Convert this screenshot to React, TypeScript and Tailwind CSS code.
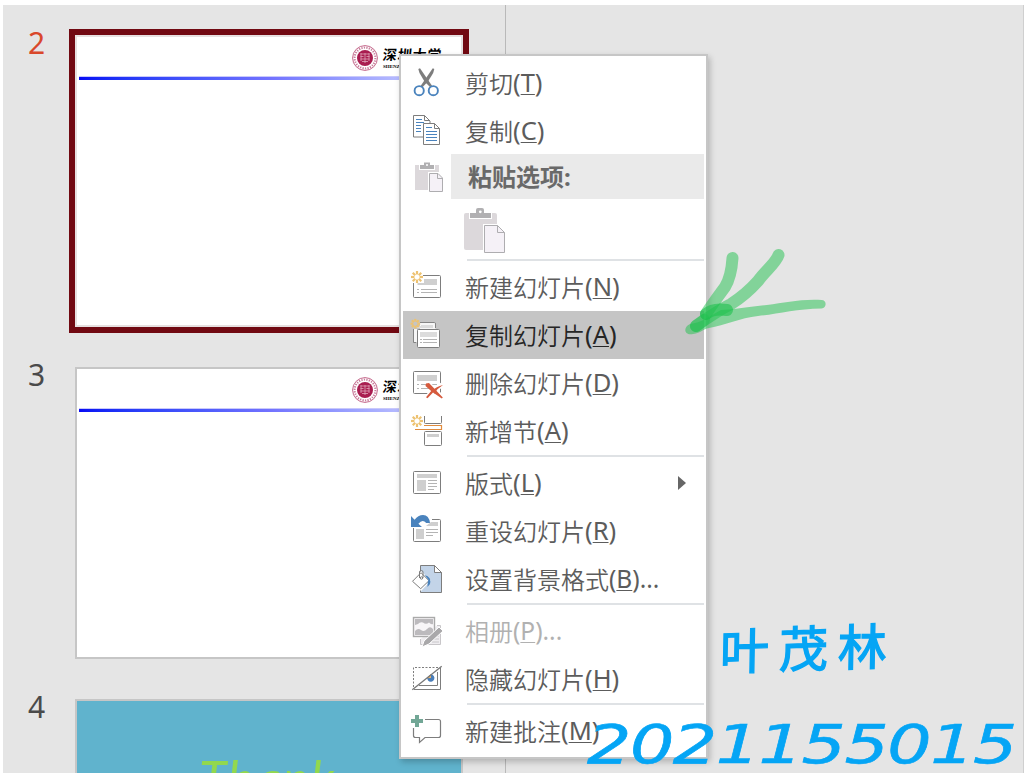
import type { ReactNode } from "react";

const G = "#7d7d7d";
const L = "#b4b4b4";

function Star({ x, y, r = 6 }: { x: number; y: number; r?: number }) {
  return (
    <g stroke="#edc271" strokeWidth="2.2">
      {[0, 45, 90, 135, 180, 225, 270, 315].map((a) => (
        <line key={a} x1={x + r * 0.42} y1={y} x2={x + r} y2={y} transform={`rotate(${a} ${x} ${y})`} />
      ))}
    </g>
  );
}

function Icon({ children }: { children: ReactNode }) {
  return (
    <svg width="48" height="48" viewBox="0 0 48 48" fill="none" className="h-12 w-12 shrink-0">
      {children}
    </svg>
  );
}

const CutIcon = (
  <Icon>
    <path d="M15.3 10 L17 9.3 L29.5 27.5 L27 28 L21.5 22.5 L16.5 14 Z" fill={G} />
    <path d="M31.3 10 L29.8 9.3 L17.2 27.5 L19.7 28 L25 22.5 L30.2 14 Z" fill={G} />
    <circle cx="16.2" cy="31.7" r="4.6" stroke="#4a83bd" strokeWidth="1.9" />
    <circle cx="30.3" cy="31.7" r="4.6" stroke="#4a83bd" strokeWidth="1.9" />
  </Icon>
);

const CopyIcon = (
  <Icon>
    <path d="M21 30 H10.5 V8.5 H21.5 L27 14 V16" stroke={G} />
    <path d="M21.5 8.5 V13.5 H27" stroke={G} />
    <path d="M13 12.5h6M13 15.5h8M13 18.5h5M13 21.5h5M13 24.5h5" stroke="#4a83bd" />
    <path d="M20.5 16.5 H31.5 L36.5 21.5 V37.5 H20.5 Z" fill="#fff" stroke={G} />
    <path d="M31.5 16.5 V21.5 H36.5" stroke={G} />
    <path d="M23 20.5h6M23 24.5h11M23 27.5h11M23 30.5h11M23 33.5h11" stroke="#4a83bd" />
  </Icon>
);

const PasteIcon = (
  <Icon>
    <path d="M12 11h24v25H12z" fill="#dcd8db" />
    <path d="M16 10h16v6H16z" fill="#fff" />
    <path d="M17 11h4V8.5h6V11h4v4H17z" fill="#b1b0b2" />
    <circle cx="24" cy="11" r="1" fill="#fff" />
    <path d="M25 18h16v22H25z" fill="#fff" />
    <path d="M26.5 19.5H35L39.5 24V37.5h-13z" fill="#f5f1f7" stroke="#aeadb0" />
    <path d="M34.5 19.5v5h5" stroke="#aeadb0" />
  </Icon>
);

const NewSlideIcon = (
  <Icon>
    <path d="M20 12.5H36.5Q37.5 12.5 37.5 13.5V33.5Q37.5 34.5 36.5 34.5H11.5Q10.5 34.5 10.5 33.5V20" stroke={G} />
    <path d="M21 16h13v6H14.5v-2H21z" fill="#cfcfcf" />
    <path d="M14 26.5h2M18 26.5h16M14 29.5h2M18 29.5h16" stroke={L} />
    <Star x={14} y={14} />
  </Icon>
);

const DuplicateIcon = (
  <Icon>
    <path d="M17 11.5H31.5Q32.5 11.5 32.5 13V18H14V31H11V18H17Z" fill="#f6f6f6" />
    <path d="M13 31.5H10.5V18M17 11.5H31.5Q32.5 11.5 32.5 13V17" stroke="#858585" />
    <path d="M18 14h12v3H14v-2h4z" fill="#dcdcdc" />
    <rect x="14.5" y="18.5" width="22" height="18" rx="1" fill="#fff" stroke={G} />
    <path d="M17 21h17v5H17z" fill="#dcdcdc" />
    <path d="M17 28.5h2M20 28.5h14M17 31.5h2M20 31.5h14" stroke={L} />
    <Star x={12.3} y={12.7} r={4.8} />
  </Icon>
);

const DeleteIcon = (
  <Icon>
    <rect x="10.5" y="12.5" width="27" height="22" rx="1" stroke={G} />
    <path d="M14 16h20v6H14z" fill="#cfcfcf" />
    <path d="M14 25.5h2M18 25.5h16M14 29.5h2M18 29.5h8" stroke={L} />
    <path d="M24 25Q31 29 38.5 38.5M39 26Q31 30 24 38.5" stroke="#fff" strokeWidth="5" />
    <path d="M23 24.5L26 24L39.8 38.5L38.8 39.5L30 33.5L24.5 39.3L23 38.3L28.2 32L22.5 27Z" fill="#d65a3d" />
    <path d="M29.5 31.5Q33 27.5 40 26Q35 29 31.5 34Z" fill="#d65a3d" />
  </Icon>
);

const SectionIcon = (
  <Icon>
    <path d="M21.5 9V15.5Q21.5 16.5 22.5 16.5H37.5Q38.5 16.5 38.5 15.5V9" stroke={G} />
    <path d="M21 18.5H38.5V22.5H12" stroke="#e08b3e" strokeWidth="1.2" />
    <rect x="21.5" y="24.5" width="17" height="14" rx="1" stroke={G} />
    <path d="M24 27h12v3H24z" fill="#cfcfcf" />
    <Star x={14} y={14} />
  </Icon>
);

const LayoutIcon = (
  <Icon>
    <rect x="10.5" y="12.5" width="27" height="22" rx="1" stroke={G} />
    <path d="M14 15h20v4H14zM14 21h9v11H14z" fill="#cfcfcf" />
    <path d="M25 21.5h9M25 24.5h9M25 27.5h9M25 30.5h6" stroke={L} />
  </Icon>
);

const ResetIcon = (
  <Icon>
    <path d="M29 12.5H36.5Q37.5 12.5 37.5 13.5V33.5Q37.5 34.5 36.5 34.5H11.5Q10.5 34.5 10.5 33.5V21" stroke={G} />
    <path d="M28 15h7v4H23zM13 22h8v10h-8z" fill="#cfcfcf" />
    <path d="M23 22.5h12M23 25.5h12M23 28.5h7" stroke={L} />
    <path d="M8 9V20H19L15.4 16.8Q19.5 11.5 23.2 16H27Q26 8.2 20 8Q15 8 11.6 12.7Z" fill="#4a83bd" />
  </Icon>
);

const BackgroundIcon = (
  <Icon>
    <path d="M17.5 10.5H31.5L38.5 17.5V37.5H17.5Z" fill="#c3d4e8" stroke={G} />
    <path d="M31.5 10.5V17.5H38.5Z" fill="#fff" stroke={G} />
    <path d="M8 26.3L18 16L28 25.7L18 36Z" fill="#fff" />
    <path d="M9.5 26.3L18 17.7L26 25.7L17.7 33.7Z" fill="#fff" stroke={G} />
    <path d="M16.5 23V17Q16.5 15.5 18.3 15.5Q20 15.5 20 17V23" stroke={G} />
    <circle cx="18.5" cy="23" r="1.2" stroke={G} />
    <path d="M21.5 20Q29 22 27 29L24.5 32Q24.5 26 25.5 25Z" fill="#4a83bd" />
  </Icon>
);

const AlbumIcon = (
  <Icon>
    <path d="M34 18.5H37.5V37.5H17.5V32" fill="#efedf0" stroke="#c8c6c9" />
    <path d="M29 29h7M29 32h7M29 35h7" stroke="#c8c6c9" />
    <rect x="10.5" y="10.5" width="21" height="19" fill="#f8f6f8" stroke="#aaa" strokeWidth="1.4" />
    <path d="M12 12h18v5Q28 18 26 15.5Q23 18 20 15.5Q17 14.5 15 17L12 18zM12 24Q15 20.5 18 23T24 22T30 22V28H12Z" fill="#bcbabd" />
    <path d="M19 40L21 34L36 20L40 24L26 37Z" fill="#a9a8aa" stroke="#fff" />
  </Icon>
);

const HideIcon = (
  <Icon>
    <path d="M10.5 32V12.5H36" stroke={G} strokeDasharray="2 1.5" />
    <path d="M37.5 13V34.5H11M34.5 17V30.5H16" stroke={G} />
    <path d="M24 23L27.7 19.3A3.7 3.7 0 1 1 25 25.5Z" fill="#4a7db8" />
    <path d="M23.5 23.2L28 19.3V23Z" fill="#e7b36b" />
    <path d="M9.3 34.7L38.7 11.3" stroke="#777" strokeWidth="1.3" />
  </Icon>
);

const CommentIcon = (
  <Icon>
    <path d="M22 12.5H35.5Q37.5 12.5 37.5 14.5V28.5Q37.5 30.5 35.5 30.5H22L16.5 35.5V30.5H12.5Q10.5 30.5 10.5 28.5V21" stroke={G} strokeWidth="1.2" />
    <path d="M12 8h4v4h4v4h-4v4h-4v-4H8v-4h4z" fill="#72a796" />
  </Icon>
);

interface ItemProps {
  icon: ReactNode;
  label: string;
  hotkey: string;
  suffix?: string;
  disabled?: boolean;
  active?: boolean;
  submenu?: boolean;
  short?: boolean;
}

function Item({ icon, label, hotkey, suffix = "", disabled, active, submenu, short }: ItemProps) {
  return (
    <li
      className={`flex ${short ? "h-[47px]" : "h-12"} ${active ? "bg-[#c5c5c5] text-[#262626]" : disabled ? "text-[#b1b1b1]" : "text-[#5c5c5c]"}`}
    >
      {icon}
      <span className="flex h-12 flex-1 items-center pl-[14px] text-[24px] leading-none whitespace-nowrap">
        <span className="font-['Noto_Sans_CJK_SC_DemiLight','Noto_Sans_CJK_SC',sans-serif] font-[350]">{label}</span>
        <span className={suffix ? "text-[24.5px]" : "text-[25.5px]"}>
          (<span className="underline decoration-1 underline-offset-[2px]">{hotkey}</span>){suffix}
        </span>
      </span>
      {submenu && (
        <span className="flex h-12 w-[26px] items-center">
          <svg width="8" height="14" viewBox="0 0 8 14">
            <path d="M0 0L8 7L0 14Z" fill="#666" />
          </svg>
        </span>
      )}
    </li>
  );
}

function Separator() {
  return <li className="ml-16 h-1 border-t-2 border-[#dfe2e5]" />;
}

function ContextMenu() {
  return (
    <ul className="absolute top-[54px] left-[399px] flex h-[705px] w-[309px] flex-col border-2 border-[#c6c6c6] bg-white px-[2px] pt-[3px] pb-[2px] font-['Noto_Sans','Noto_Sans_CJK_SC',sans-serif] shadow-[2px_3px_6px_rgba(0,0,0,0.22)]">
      <Item icon={CutIcon} label="剪切" hotkey="T" />
      <Item icon={CopyIcon} label="复制" hotkey="C" short />
      <li className="flex h-[45px] text-[#696969]">
        {PasteIcon}
        <span className="flex flex-1 items-center bg-[#eaeaea] pl-[17px] text-[24px] leading-none font-bold">粘贴选项:</span>
      </li>
      <li className="h-[60px] pt-[9px] pl-[61px]">
        <svg width="42" height="46" viewBox="0 0 42 46" fill="none">
          <path d="M2 5H31Q33 5 33 7V42H2Q0 42 0 40V7Q0 5 2 5Z" fill="#dcd8db" />
          <path d="M5 4h23v7H5z" fill="#fff" />
          <path d="M6 5h6V2q0-2 2-2h4q2 0 2 2v3h7v5H6z" fill="#b1b0b2" />
          <circle cx="16.3" cy="3.8" r="1.4" fill="#fff" />
          <path d="M19 16h23v30H19z" fill="#fff" />
          <path d="M20.5 17.5H33.5L40.5 24.5V44.5H20.5Z" fill="#f5f1f7" stroke="#aeadb0" />
          <path d="M33.5 17.5V24.5H40.5" stroke="#aeadb0" />
        </svg>
      </li>
      <Separator />
      <Item icon={NewSlideIcon} label="新建幻灯片" hotkey="N" />
      <Item icon={DuplicateIcon} label="复制幻灯片" hotkey="A" active />
      <Item icon={DeleteIcon} label="删除幻灯片" hotkey="D" />
      <Item icon={SectionIcon} label="新增节" hotkey="A" />
      <Separator />
      <Item icon={LayoutIcon} label="版式" hotkey="L" submenu />
      <Item icon={ResetIcon} label="重设幻灯片" hotkey="R" />
      <Item icon={BackgroundIcon} label="设置背景格式" hotkey="B" suffix="..." />
      <Separator />
      <Item icon={AlbumIcon} label="相册" hotkey="P" suffix="..." disabled />
      <Item icon={HideIcon} label="隐藏幻灯片" hotkey="H" />
      <Separator />
      <Item icon={CommentIcon} label="新建批注" hotkey="M" />
    </ul>
  );
}

function SlideHeader() {
  return (
    <>
      <div className="flex h-[39px] items-start pt-[7px] pl-[274px]">
        <svg width="28" height="28" viewBox="0 0 28 28" fill="none" className="shrink-0">
          <circle cx="14" cy="14" r="12.4" stroke="#c4668a" strokeWidth="1" />
          <circle cx="14" cy="14" r="10.4" stroke="#c97f9c" strokeWidth="2" strokeDasharray="1.3 1.2" />
          <circle cx="14" cy="14" r="8" fill="#a91d50" />
          <path d="M9.5 10h9M9.5 12.5h3M15.5 12.5h3M9.5 15h9M11 17.5h6M14 9v10M10 9v8M18 9v8" stroke="#dfa3b8" strokeWidth=".8" />
        </svg>
        <div className="ml-[4px] flex flex-col whitespace-nowrap text-black">
          <span className="-skew-x-6 font-['Noto_Sans_CJK_SC',sans-serif] text-[14px] leading-[20px] font-bold tracking-[0.8px]">深圳大学</span>
          <span className="font-['Liberation_Serif',serif] text-[5px] leading-[5px] font-bold">SHENZHEN UNIVERSITY</span>
        </div>
      </div>
      <div className="ml-[2px] h-[4px] border-t border-[#c9c9fb] bg-linear-to-r from-[#0808f4] via-[#7272ff] to-[#dadaff]" />
    </>
  );
}

function SlideNumber({ n, selected }: { n: number; selected?: boolean }) {
  return (
    <span
      className={`w-[66px] shrink-0 pl-[25px] font-['Noto_Sans',sans-serif] text-[30px] leading-[28px] ${selected ? "text-[#d9482b]" : "-mt-[6px] text-[#4a4a4a]"}`}
    >
      {n}
    </span>
  );
}

function Thumbnails() {
  return (
    <aside className="flex h-[768px] w-[503px] shrink-0 flex-col overflow-hidden border-r border-[#b9b9b9] pt-6">
      <div className="flex h-[304px] shrink-0">
        <SlideNumber n={2} selected />
        <div className="h-[304px] w-[400px] border-[6px] border-[#710912]">
          <div className="h-full border-2 border-[#e6e0e0] bg-white">
            <SlideHeader />
          </div>
        </div>
      </div>
      <div className="mt-[34px] flex h-[292px] shrink-0">
        <SlideNumber n={3} />
        <div className="ml-[6px] h-[292px] w-[388px] border-2 border-[#c6c6c6] bg-white">
          <SlideHeader />
        </div>
      </div>
      <div className="mt-10 flex h-[292px] shrink-0">
        <SlideNumber n={4} />
        <div className="ml-[6px] h-[292px] w-[388px] border-2 border-[#c6c6c6] bg-[#60b3cd] pt-[47px] pl-[122px]">
          <span className="block font-['Lato',sans-serif] text-[50px] leading-[60px] tracking-[1.5px] whitespace-nowrap text-[#92d84e] italic">
            Thank
          </span>
        </div>
      </div>
    </aside>
  );
}

function Annotations() {
  return (
    <>
      <svg width="160" height="100" viewBox="680 240 160 100" fill="none" className="absolute top-[240px] left-[680px]" strokeLinecap="round" strokeLinejoin="round">
        <g stroke="#1fc14e" strokeOpacity=".5">
          <path d="M732.5 258C732 266 731 277 725 287C717 298 711 306 706 314" strokeWidth="12" />
          <path d="M778.5 255C776 263 765 271 758 281C750 290 742 297 731 304C717 311 706 319 696 326" strokeWidth="12" />
        </g>
        <path
          d="M821.5 300C799 299 785 303 767 305C749 307 731 310 721 310C710 316 701 323 690 324C682 328 685 336 693 334C701 333 703 329 709 328C725 325 740 318 758 316C778 314 796 309 821.5 308.5C827 308 827 300 821.5 300Z"
          fill="#1fc14e"
          fillOpacity=".5"
        />
        <path d="M706 314C713 308 721 309 727 310" stroke="#1fc14e" strokeOpacity=".6" strokeWidth="12" />
        <path d="M696 326L704 320" stroke="#1fc14e" strokeOpacity=".4" strokeWidth="12" />
      </svg>
      <span className="absolute top-[614px] left-[720px] -rotate-2 -skew-x-3 font-['Noto_Sans_CJK_SC',sans-serif] text-[49px] leading-[64px] tracking-[10px] whitespace-nowrap text-[#05a5f5] [-webkit-text-stroke:1.4px_#05a5f5]">
        叶茂林
      </span>
      <span className="absolute top-[708px] left-[587px] origin-left scale-x-[1.29] font-['DejaVu_Sans',sans-serif] text-[54px] leading-[74px] tracking-[-1.1px] whitespace-nowrap text-[#05a5f5] italic [-webkit-text-stroke:0.6px_#05a5f5]">
        2021155015
      </span>
    </>
  );
}

export default function App() {
  return (
    <div className="relative h-[774px] w-[1024px] overflow-hidden bg-white pt-[5px] pl-[3px]">
      <div className="flex h-[768px] w-[1021px] border-r border-[#cfcfcf] bg-[#e5e5e5]">
        <Thumbnails />
        <main className="flex-1" />
      </div>
      <ContextMenu />
      <Annotations />
    </div>
  );
}
